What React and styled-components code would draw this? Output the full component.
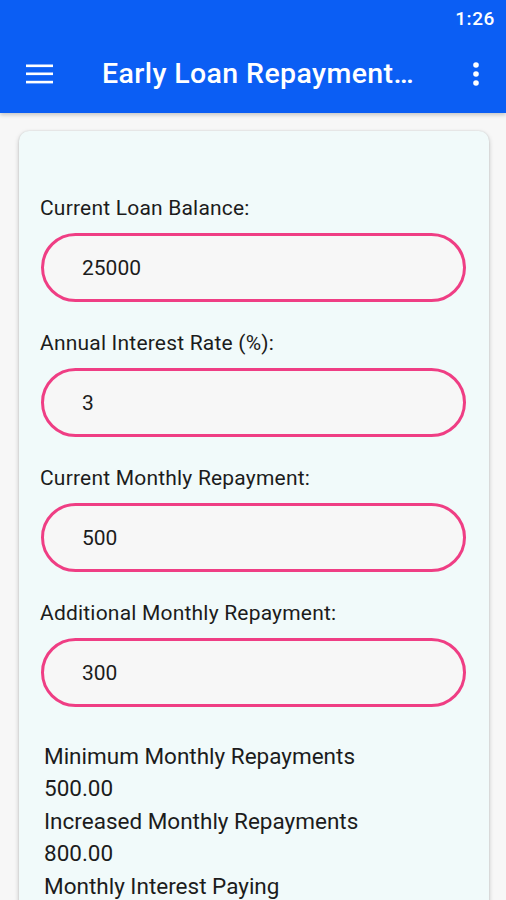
import React from 'react'
import styled, { createGlobalStyle } from 'styled-components';

const Global = createGlobalStyle`
    html, body {
        margin: 0;
        padding: 0;
        background: #f7f7f7;
        font-family: Roboto, "Noto Sans", Arial, sans-serif;
    }
    * { box-sizing: border-box; }
`;

const Header = styled.header`
    background-color: #0b5ef4;
    color: #fff;
    box-shadow: 0 2px 4px rgba(0, 0, 0, 0.2);
`;

const StatusBar = styled.div`
    height: 36px;
    display: flex;
    align-items: center;
    justify-content: flex-end;
    padding: 0 11px;
    font-size: 19px;
    font-weight: 500;
    letter-spacing: 0.6px;
`;

const Toolbar = styled.div`
    height: 77px;
    display: flex;
    align-items: center;
    padding: 0 26px 2px 26px;
`;

const Title = styled.h1`
    flex: 1;
    margin: 0 20px 0 49px;
    font-size: 28.5px;
    font-weight: 500;
    letter-spacing: 0.4px;
    white-space: nowrap;
    overflow: hidden;
`;

const IconButton = styled.div`
    display: flex;
    align-items: center;
    justify-content: center;
`;

const Page = styled.main`
    padding: 18px 17px 30px 19px;
`;

const Card = styled.section`
    background-color: #f1fafa;
    border-radius: 10px;
    box-shadow: 0 2px 5px rgba(0, 0, 0, 0.22), 0 0 2px rgba(0, 0, 0, 0.12);
    padding: 65px 23px 60px 21px;
`;

const Field = styled.div`
    display: flex;
    flex-direction: column;
    margin-bottom: 29px;
`;

const Label = styled.label`
    font-size: 21px;
    line-height: 24px;
    letter-spacing: 0.2px;
    color: #1c1c1c;
    margin-bottom: 13px;
`;

const Input = styled.input`
    height: 69px;
    margin-left: 1px;
    border: 3px solid #ef3e84;
    border-radius: 35px;
    background-color: #f7f7f7;
    padding: 0 0 0 38px;
    font-family: Roboto, "Noto Sans", Arial, sans-serif;
    font-size: 21px;
    color: #1c1c1c;
    outline: none;
`;

const Results = styled.div`
    padding: 4px 0 0 4px;
`;

const Line = styled.p`
    margin: 0;
    font-size: 22.5px;
    line-height: 32.4px;
    color: #1c1c1c;
`;

const fields = [
    { label: 'Current Loan Balance:', value: '25000' },
    { label: 'Annual Interest Rate (%):', value: '3' },
    { label: 'Current Monthly Repayment:', value: '500' },
    { label: 'Additional Monthly Repayment:', value: '300' },
];

const results = [
    'Minimum Monthly Repayments',
    '500.00',
    'Increased Monthly Repayments',
    '800.00',
    'Monthly Interest Paying',
];

const Menu = () => (
    <svg width="27" height="20" viewBox="0 0 27 20">
        <rect x="0" y="0.5" width="27" height="2.6" fill="#fff" />
        <rect x="0" y="8.5" width="27" height="2.6" fill="#fff" />
        <rect x="0" y="16.8" width="27" height="2.6" fill="#fff" />
    </svg>
);

const Dots = () => (
    <svg width="8" height="26" viewBox="0 0 8 26">
        <circle cx="4" cy="4" r="2.8" fill="#fff" />
        <circle cx="4" cy="13" r="2.8" fill="#fff" />
        <circle cx="4" cy="22" r="2.8" fill="#fff" />
    </svg>
);

const App = () => {
    return (
        <>
            <Global />
            <Header>
                <StatusBar>1:26</StatusBar>
                <Toolbar>
                    <IconButton><Menu /></IconButton>
                    <Title>Early Loan Repayment…</Title>
                    <IconButton><Dots /></IconButton>
                </Toolbar>
            </Header>
            <Page>
                <Card>
                    {fields.map((f) => (
                        <Field key={f.label}>
                            <Label>{f.label}</Label>
                            <Input defaultValue={f.value} />
                        </Field>
                    ))}
                    <Results>
                        {results.map((r, i) => <Line key={i}>{r}</Line>)}
                    </Results>
                </Card>
            </Page>
        </>
    )
}

export default App
